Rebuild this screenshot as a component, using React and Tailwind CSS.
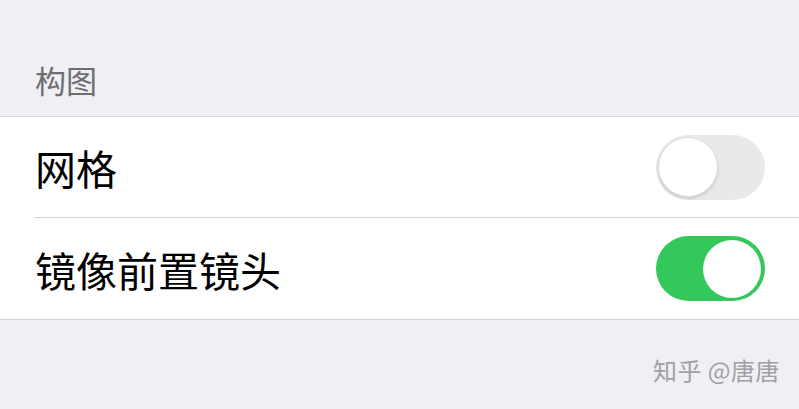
export default function App() {
  const font = { fontFamily: '"Noto Sans CJK SC", "Noto Sans", sans-serif' };
  return (
    <div className="w-[799px] h-[409px] bg-[#efeff4] overflow-hidden" style={font}>
      <div className="h-[116px] flex items-end pl-[35px] pb-[18px]">
        <span className="text-[31px] leading-[36px] text-[#6d6d72]">构图</span>
      </div>
      <div className="bg-white border-y border-[#d4d4d8]">
        <Row label="网格" on={false} divider />
        <Row label="镜像前置镜头" on />
      </div>
      <div className="flex justify-end pr-[19px] pt-[34px]">
        <span className="text-[24px] leading-[32px] tracking-[0.5px] text-[#a0a0a5]">知乎 @唐唐</span>
      </div>
    </div>
  );
}

function Row({ label, on, divider }) {
  return (
    <div className="pl-[34px]">
      <div className={`h-[101px] flex items-center justify-between pr-[34px] ${divider ? 'border-b border-[#d4d4d8]' : ''}`}>
        <span className="pl-px text-[41px] leading-[48px] text-black">{label}</span>
        <Toggle on={on} />
      </div>
    </div>
  );
}

function Toggle({ on }) {
  return on ? (
    <div className="w-[109px] h-[65px] rounded-full bg-[#34c759] flex items-center justify-end pr-[4px]">
      <div className="w-[58px] h-[58px] rounded-full bg-white" />
    </div>
  ) : (
    <div className="w-[109px] h-[65px] rounded-full bg-[#e9e9ea] flex items-center pl-[2px]">
      <div className="w-[60px] h-[60px] rounded-full bg-white border border-[#dcdcdc] shadow-[0_2px_3px_rgba(0,0,0,0.12)]" />
    </div>
  );
}
